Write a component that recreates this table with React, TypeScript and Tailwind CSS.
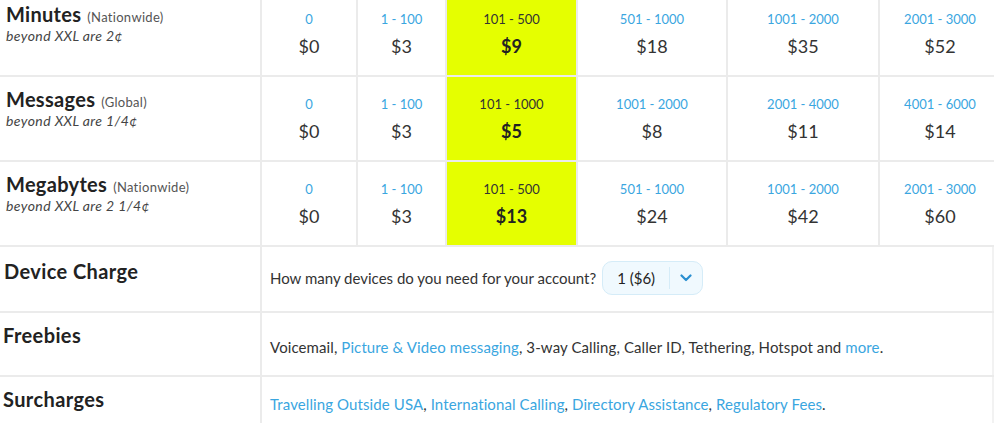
import React from "react";

const cols = [
  { w: "w-[96px]" },
  { w: "w-[89px]" },
  { w: "w-[131px]" },
  { w: "w-[150px]" },
  { w: "w-[152px]" },
  { w: "w-[120px]" },
];

type Row = {
  title: string;
  scope: string;
  note: string;
  cells: { range: string; price: string }[];
};

const rows: Row[] = [
  {
    title: "Minutes",
    scope: "(Nationwide)",
    note: "beyond XXL are 2¢",
    cells: [
      { range: "0", price: "$0" },
      { range: "1 - 100", price: "$3" },
      { range: "101 - 500", price: "$9" },
      { range: "501 - 1000", price: "$18" },
      { range: "1001 - 2000", price: "$35" },
      { range: "2001 - 3000", price: "$52" },
    ],
  },
  {
    title: "Messages",
    scope: "(Global)",
    note: "beyond XXL are 1/4¢",
    cells: [
      { range: "0", price: "$0" },
      { range: "1 - 100", price: "$3" },
      { range: "101 - 1000", price: "$5" },
      { range: "1001 - 2000", price: "$8" },
      { range: "2001 - 4000", price: "$11" },
      { range: "4001 - 6000", price: "$14" },
    ],
  },
  {
    title: "Megabytes",
    scope: "(Nationwide)",
    note: "beyond XXL are 2 1/4¢",
    cells: [
      { range: "0", price: "$0" },
      { range: "1 - 100", price: "$3" },
      { range: "101 - 500", price: "$13" },
      { range: "501 - 1000", price: "$24" },
      { range: "1001 - 2000", price: "$42" },
      { range: "2001 - 3000", price: "$60" },
    ],
  },
];

function Link({ children }: { children: React.ReactNode }) {
  return <span className="text-[#3aa6df]">{children}</span>;
}

export default function App() {
  return (
    <div
      className="w-[1000px] h-[435px] overflow-hidden bg-white text-[#2b2b2b]"
      style={{ fontFamily: "Lato, 'Open Sans', sans-serif" }}
    >
      <div className="-mt-[8px] w-[994px]">
        {rows.map((r, ri) => (
          <div key={ri} className="flex h-[85px] border-b-2 border-[#ebebeb]">
            <div className="w-[262px] shrink-0 border-r-2 border-[#ebebeb] pl-[6px] pt-[7px]">
              <div className="flex items-baseline gap-[6px]">
                <span className="text-[20px] font-bold tracking-[0.3px] text-[#222]">{r.title}</span>
                <span className="text-[13px] tracking-[0.3px] text-[#555]">{r.scope}</span>
              </div>
              <div className="-mt-[4px] text-[14px] italic tracking-[0.4px] text-[#444]">{r.note}</div>
            </div>
            {r.cells.map((c, ci) => {
              const hi = ci === 2;
              return (
                <div
                  key={ci}
                  className={`${cols[ci].w} shrink-0 flex flex-col items-center pt-[18px] ${
                    ci < 5 ? "border-r-2 border-[#ebebeb]" : ""
                  } ${hi ? "bg-[#e5ff00] border-r-0" : ""}`}
                >
                  <span
                    className={`text-[13px] leading-[18px] ${
                      hi ? "text-[#333]" : "text-[#3aa6df]"
                    }`}
                  >
                    {c.range}
                  </span>
                  <span
                    className={`mt-[6px] text-[18px] leading-[24px] ${
                      hi ? "font-bold text-[#222]" : "text-[#333]"
                    }`}
                  >
                    {c.price}
                  </span>
                </div>
              );
            })}
          </div>
        ))}

        <div className="flex h-[66px] border-b-2 border-[#ebebeb]">
          <div className="w-[262px] shrink-0 border-r-2 border-[#ebebeb] pl-[4px] pt-[9px]">
            <span className="text-[20px] font-bold tracking-[0.4px] text-[#222]">Device Charge</span>
          </div>
          <div className="flex flex-1 items-center gap-[6px] pl-[8px] pb-[2px] border-r-2 border-[#f2f2f2]">
            <span className="text-[15px] text-[#333]">
              How many devices do you need for your account?
            </span>
            <div className="flex h-[34px] items-center rounded-[10px] border border-[#d5ecf8] bg-[#f0f9fe]">
              <span className="px-[14px] text-[15px] text-[#222]">1 ($6)</span>
              <span className="h-[22px] w-px bg-[#d5ecf8]" />
              <span className="flex w-[32px] items-center justify-center">
                <svg width="12" height="8" viewBox="0 0 12 8" fill="none">
                  <path d="M1.5 1.5L6 6l4.5-4.5" stroke="#2a8fd0" strokeWidth="2.2" strokeLinecap="round" strokeLinejoin="round" />
                </svg>
              </span>
            </div>
          </div>
        </div>

        <div className="flex h-[64px] border-b-2 border-[#ebebeb]">
          <div className="w-[262px] shrink-0 border-r-2 border-[#ebebeb] pl-[3px] pt-[7px]">
            <span className="text-[20px] font-bold tracking-[0.4px] text-[#222]">Freebies</span>
          </div>
          <div className="flex flex-1 items-center pl-[8px] pt-[6px] border-r-2 border-[#f2f2f2]">
            <span className="text-[15px] tracking-[0.1px] text-[#333]">
              Voicemail, <Link>Picture &amp; Video messaging</Link>, 3-way Calling, Caller ID,
              Tethering, Hotspot and <Link>more</Link>.
            </span>
          </div>
        </div>

        <div className="flex h-[46px]">
          <div className="w-[262px] shrink-0 border-r-2 border-[#ebebeb] pl-[3px] pt-[7px]">
            <span className="text-[20px] font-bold tracking-[0.4px] text-[#222]">Surcharges</span>
          </div>
          <div className="flex flex-1 items-center pl-[8px] pt-[8px] border-r-2 border-[#f2f2f2]">
            <span className="text-[15px] tracking-[0.1px] text-[#333]">
              <Link>Travelling Outside USA</Link>, <Link>International Calling</Link>,{" "}
              <Link>Directory Assistance</Link>, <Link>Regulatory Fees</Link>.
            </span>
          </div>
        </div>
      </div>
    </div>
  );
}
